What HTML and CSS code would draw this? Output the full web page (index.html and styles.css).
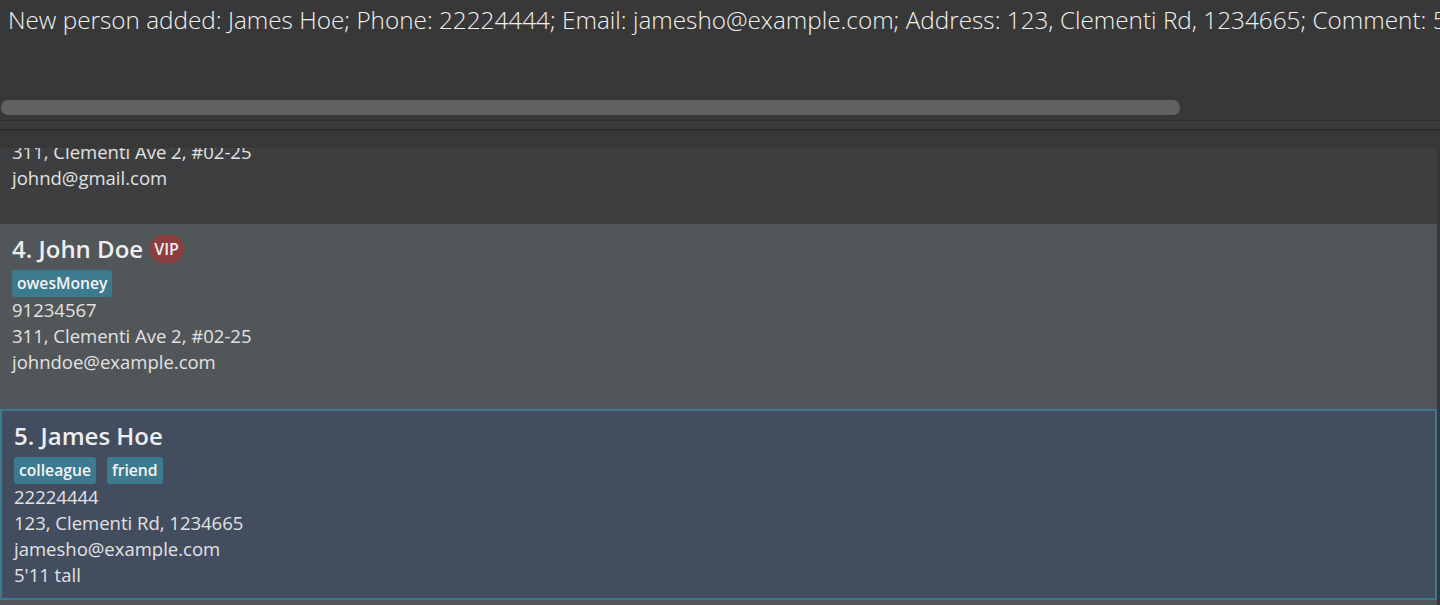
FILE: index.html
```html
<!DOCTYPE html>
<html>
<head>
<meta charset="utf-8">
<link rel="stylesheet" href="styles.css">
</head>
<body>
<div class="app">
  <div class="result">
    <div class="msg">New person added: James Hoe; Phone: 22224444; Email: jamesho@example.com; Address: 123, Clementi Rd, 1234665; Comment: 5'11 tall</div>
    <div class="hscroll"></div>
  </div>
  <div class="sep"></div>
  <div class="list">
    <div class="cards">
      <div class="card card-dark card-partial">
        <div class="line">311, Clementi Ave 2, #02-25</div>
        <div class="line">johnd@gmail.com</div>
      </div>
      <div class="card card-light">
        <div class="name-row"><span class="name">4. John Doe</span><span class="vip">VIP</span></div>
        <div class="tags"><span class="tag">owesMoney</span></div>
        <div class="line">91234567</div>
        <div class="line">311, Clementi Ave 2, #02-25</div>
        <div class="line">johndoe@example.com</div>
      </div>
      <div class="card card-selected">
        <div class="name-row"><span class="name">5. James Hoe</span></div>
        <div class="tags"><span class="tag">colleague</span><span class="tag">friend</span></div>
        <div class="line">22224444</div>
        <div class="line">123, Clementi Rd, 1234665</div>
        <div class="line">jamesho@example.com</div>
        <div class="line">5'11 tall</div>
      </div>
      <div class="card card-light card-next"></div>
    </div>
  </div>
</div>
</body>
</html>
```

FILE: styles.css
```css
html, body {
  margin: 0;
  padding: 0;
  background: #383838;
}

.app {
  width: 1440px;
  height: 605px;
  overflow: hidden;
  display: flex;
  flex-direction: column;
  font-family: "Open Sans", "Noto Sans", sans-serif;
  color: #e4e4e4;
}

.result {
  height: 120px;
  display: flex;
  flex-direction: column;
  background: #383838;
  overflow: hidden;
  flex: none;
}

.msg {
  padding: 4px 0 0 8px;
  font-size: 24.3px;
  font-weight: 300;
  line-height: 32px;
  white-space: nowrap;
  color: #f2f2f2;
}

.hscroll {
  margin-top: auto;
  margin-bottom: 5px;
  margin-left: 1px;
  width: 1179px;
  height: 15px;
  border-radius: 7px;
  background: #616161;
}

.sep {
  flex: none;
  height: 8px;
  border-top: 1px solid #2b2b2b;
  border-bottom: 2px solid #2c2c2c;
  background: #3a3a3a;
}

.list {
  flex: 1;
  padding: 17px 3px 0 0;
  overflow: hidden;
  background: #383838;
}

.cards {
  height: 100%;
  overflow: hidden;
}

.card {
  padding: 10px 12px 34px 12px;
}

.card-dark {
  background: #3c3e3f;
}

.card-light {
  background: #515658;
}

.card-partial {
  margin-top: -9px;
  padding-top: 0;
  padding-bottom: 33px;
}

.card-selected {
  background: #424d5f;
  border: 2px solid #3c7a90;
  padding: 10px 12px 10px 12px;
}

.card-next {
  height: 40px;
}

.name-row {
  display: flex;
  align-items: center;
  height: 30px;
}

.name {
  font-size: 24px;
  font-weight: 600;
  line-height: 30px;
  color: #eeeeee;
}

.vip {
  margin-left: 6px;
  height: 28px;
  padding: 0 5px;
  border-radius: 14px;
  background: #8a3e40;
  font-size: 16px;
  font-weight: 600;
  line-height: 28px;
  color: #f0f0f0;
}

.tags {
  display: flex;
  gap: 11px;
  margin-top: 6px;
}

.tag {
  height: 27px;
  padding: 0 5px;
  border-radius: 3px;
  background: #3c7a90;
  font-size: 15.7px;
  font-weight: 600;
  line-height: 27px;
  color: #f4f4f4;
}

.line {
  font-size: 18.5px;
  line-height: 26px;
  white-space: nowrap;
  color: #e2e2e2;
}
```
